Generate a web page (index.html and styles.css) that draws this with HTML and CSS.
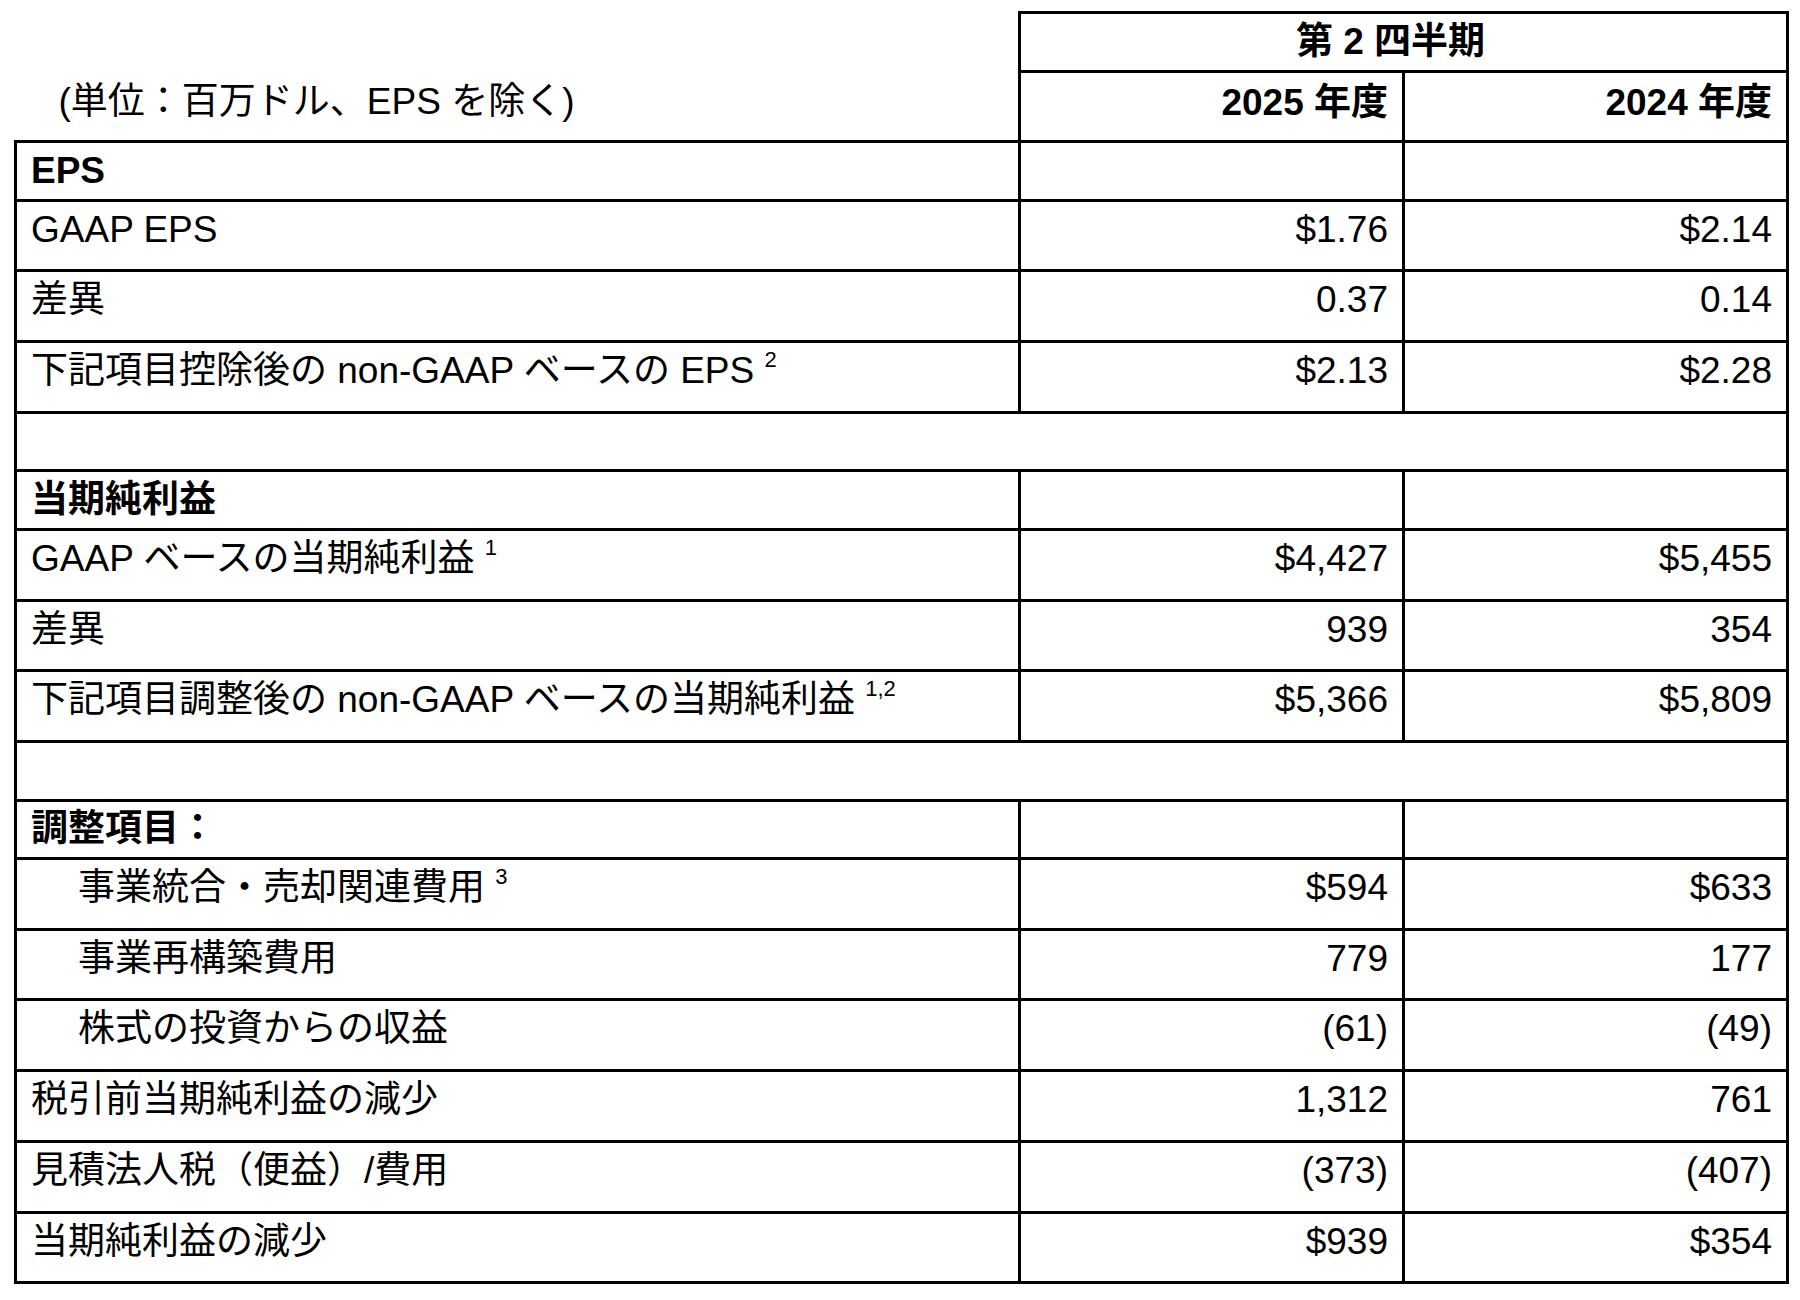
FILE: index.html
```html
<!DOCTYPE html>
<html lang="ja">
<head>
<meta charset="utf-8">
<title>第 2 四半期</title>
<link rel="stylesheet" href="styles.css">
</head>
<body>
<table class="fin">
  <colgroup>
    <col class="col-label">
    <col class="col-num">
    <col class="col-num">
  </colgroup>
  <thead>
    <tr class="head-top">
      <th class="head-empty"></th>
      <th class="period" colspan="2">第 2 四半期</th>
    </tr>
    <tr class="head-years">
      <th class="unit">(単位：百万ドル、EPS を除く)</th>
      <th class="year">2025 年度</th>
      <th class="year">2024 年度</th>
    </tr>
  </thead>
  <tbody>
    <tr class="sec"><th class="label">EPS</th><td></td><td></td></tr>
    <tr class="row"><td class="label">GAAP EPS</td><td class="num">$1.76</td><td class="num">$2.14</td></tr>
    <tr class="row"><td class="label">差異</td><td class="num">0.37</td><td class="num">0.14</td></tr>
    <tr class="row"><td class="label">下記項目控除後の non-GAAP ベースの EPS <sup>2</sup></td><td class="num">$2.13</td><td class="num">$2.28</td></tr>
    <tr class="gap"><td colspan="3"></td></tr>
    <tr class="sec"><th class="label">当期純利益</th><td></td><td></td></tr>
    <tr class="row"><td class="label">GAAP ベースの当期純利益 <sup>1</sup></td><td class="num">$4,427</td><td class="num">$5,455</td></tr>
    <tr class="row"><td class="label">差異</td><td class="num">939</td><td class="num">354</td></tr>
    <tr class="row"><td class="label">下記項目調整後の non-GAAP ベースの当期純利益 <sup>1,2</sup></td><td class="num">$5,366</td><td class="num">$5,809</td></tr>
    <tr class="gap"><td colspan="3"></td></tr>
    <tr class="sec"><th class="label">調整項目：</th><td></td><td></td></tr>
    <tr class="row"><td class="label indent">事業統合・売却関連費用 <sup>3</sup></td><td class="num">$594</td><td class="num">$633</td></tr>
    <tr class="row"><td class="label indent">事業再構築費用</td><td class="num">779</td><td class="num">177</td></tr>
    <tr class="row"><td class="label indent">株式の投資からの収益</td><td class="num">(61)</td><td class="num">(49)</td></tr>
    <tr class="row"><td class="label">税引前当期純利益の減少</td><td class="num">1,312</td><td class="num">761</td></tr>
    <tr class="row"><td class="label">見積法人税（便益）/費用</td><td class="num">(373)</td><td class="num">(407)</td></tr>
    <tr class="row"><td class="label">当期純利益の減少</td><td class="num">$939</td><td class="num">$354</td></tr>
  </tbody>
</table>
</body>
</html>
```

FILE: styles.css
```css
html, body {
  margin: 0;
  padding: 0;
  background: #ffffff;
}

body {
  font-family: "Liberation Sans", "Noto Sans CJK JP", sans-serif;
  color: #000000;
}

.fin {
  border-collapse: collapse;
  table-layout: fixed;
  width: 1772px;
  margin: 11px 0 0 14px;
}

.col-label { width: 1004px; }
.col-num { width: 384px; }

.fin th,
.fin td {
  border: 3px solid #000000;
  font-size: 37px;
  line-height: 44px;
  padding: 0 14px;
  text-align: left;
  white-space: nowrap;
}

.fin th {
  font-weight: 700;
}

/* header */
.head-top th {
  height: 56px;
  vertical-align: middle;
}

.head-empty {
  border-style: none !important;
}

.period {
  text-align: center !important;
  padding-right: 40px !important;
}

.head-years th {
  height: 59px;
  vertical-align: top;
  padding-top: 8px;
}

.unit {
  border-top-style: none !important;
  border-left-style: none !important;
  font-weight: 400 !important;
  padding-left: 43px !important;
}

.year {
  text-align: right !important;
}

/* body rows */
.sec th,
.sec td {
  height: 55.6px;
  vertical-align: middle;
}

.gap td {
  height: 55.6px;
}

.row td {
  height: 61.7px;
  vertical-align: top;
  padding-top: 6px;
}

.num {
  text-align: right !important;
}

.indent {
  padding-left: 61px !important;
}

sup {
  font-size: 22px;
  line-height: 0;
  vertical-align: 16px;
}
```
